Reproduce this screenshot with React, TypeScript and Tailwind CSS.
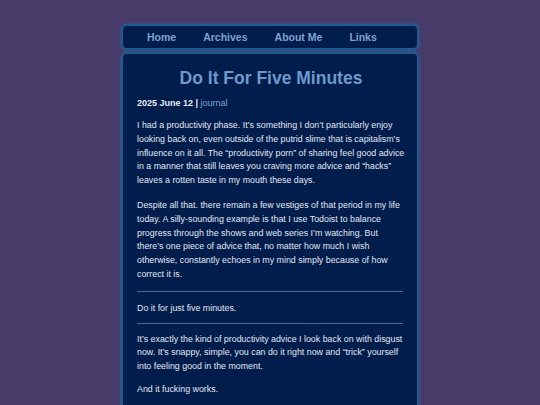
const intro = [
  'I had a productivity phase. It\u2019s something I don\u2019t particularly enjoy looking back on, even outside of the putrid slime that is capitalism\u2019s influence on it all. The \u201cproductivity porn\u201d of sharing feel good advice in a manner that still leaves you craving more advice and \u201chacks\u201d leaves a rotten taste in my mouth these days.',
  'Despite all that. there remain a few vestiges of that period in my life today. A silly-sounding example is that I use Todoist to balance progress through the shows and web series I\u2019m watching. But there\u2019s one piece of advice that, no matter how much I wish otherwise, constantly echoes in my mind simply because of how correct it is.',
]

const navLinks = ['Home', 'Archives', 'About Me', 'Links']

const body = 'text-[8.85px] leading-[13.8px] text-[#e2e7f0]'

export default function App() {
  return (
    <div className="min-h-[405px] bg-[#473b69] pt-[24px] font-['Liberation_Sans',Arial,sans-serif]">
      <div className="mx-auto flex w-[298px] flex-col gap-[2px]">
        <nav className="flex h-[26px] items-center gap-[27px] rounded-[6px] border-2 border-[#1d5a8f] bg-[#001d4b] pl-[24px] shadow-[0_0_3px_#2a6aa0]">
          {navLinks.map((link) => (
            <a key={link} href="#" className="pt-[1px] text-[10.5px] font-bold text-[#7ea3cf]">
              {link}
            </a>
          ))}
        </nav>
        <main className="rounded-[6px] border-2 border-[#1d5a8f] bg-[#001d4b] pb-6 pl-[14px] pr-[12px] pt-[11px] shadow-[0_0_3px_#2a6aa0]">
          <h1 className="text-center text-[17.5px] font-bold leading-[26px] text-[#6f99cc]">
            Do It For Five Minutes
          </h1>
          <p className="mt-[5px] text-[9px] leading-[14px] text-[#e6eaf2]">
            <span className="font-bold">2025 June 12 | </span>
            <a href="#" className="text-[#7ea3cf]">journal</a>
          </p>
          <p className={`mt-[9px] ${body}`}>{intro[0]}</p>
          <p className={`mt-[11px] ${body}`}>{intro[1]}</p>
          <hr className="mr-[2px] mt-[9px] border-t border-[#3f6c9c]" />
          <p className={`mt-[10px] ${body}`}>Do it for just five minutes.</p>
          <hr className="mr-[2px] mt-[7px] border-t border-[#3f6c9c]" />
          <p className={`mt-[9px] ${body}`}>
            It’s exactly the kind of productivity advice I look back on with disgust now. It’s snappy, simple, you can
            do it right now and “trick” yourself into feeling good in the moment.
          </p>
          <p className={`mt-[9px] ${body}`}>And it fucking works.</p>
        </main>
      </div>
    </div>
  )
}
